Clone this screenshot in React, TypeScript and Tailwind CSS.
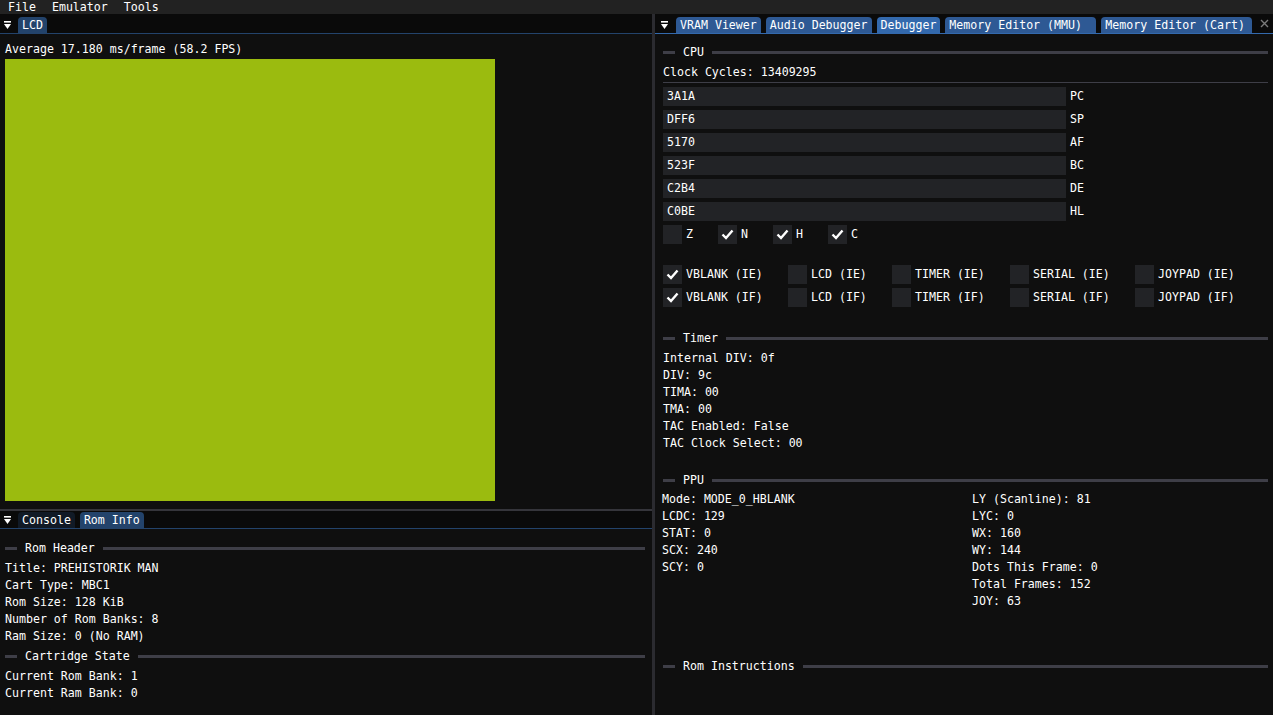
import React from "react";

const FONT = "font-['DejaVu_Sans_Mono','Liberation_Mono',monospace] text-[11.6px] leading-[13px]";
const SEP = "bg-[#3e3e47]";
// ImGui's pixel font sits 1px lower than DejaVu in a 13px line
const SH = "relative top-[1px]";

type Tab = { label: string; bg: string; w?: string };

function MenuIcon() {
  return (
    <svg width="7" height="8" viewBox="0 0 7 8" className="shrink-0">
      <rect x="0" y="0" width="7" height="1.6" fill="#fff" />
      <polygon points="0,3 7,3 3.5,8" fill="#fff" />
    </svg>
  );
}

function TabBar({ tabs, line, iconPad, tabPad, h, close }: { tabs: Tab[]; line: string; iconPad: string; tabPad: string; h: string; close?: boolean }) {
  return (
    <div className="flex flex-col bg-[#0a0a0a]">
      <div className={`flex items-end ${h}`}>
        <div className={`h-[16px] flex items-center ${iconPad}`}>
          <MenuIcon />
        </div>
        <div className={`flex items-end gap-[5px] ${tabPad}`}>
          {tabs.map((t) => (
            <div key={t.label} className={`h-[16px] px-[4px] rounded-t-[4px] flex items-center whitespace-pre ${t.bg} ${t.w ?? ""}`}>
              {t.label}
            </div>
          ))}
        </div>
        {close && (
          <div className="ml-auto h-[19px] w-[16px] flex items-center justify-center mr-[1px]">
            <svg width="9" height="9" viewBox="0 0 9 9">
              <path d="M1 1 L8 8 M8 1 L1 8" stroke="#7a7a7a" strokeWidth="1.4" />
            </svg>
          </div>
        )}
      </div>
      <div className={`h-[1px] ${line}`} />
    </div>
  );
}

function SepText({ label }: { label: string }) {
  return (
    <div className={`flex items-center h-[19px] ${SH}`}>
      <div className={`w-[12px] h-[3px] ${SEP}`} />
      <span className="px-[8px] whitespace-pre">{label}</span>
      <div className={`flex-1 h-[3px] ${SEP}`} />
    </div>
  );
}

function L({ children }: { children: React.ReactNode }) {
  return <div className={`whitespace-pre ${SH}`}>{children}</div>;
}

function Check({ on }: { on: boolean }) {
  return (
    <div className="w-[19px] h-[19px] bg-[#222326] flex items-center justify-center shrink-0">
      {on && (
        <svg width="13" height="11" viewBox="0 0 13 11">
          <path d="M1.5 5.5 L5 9 L11.5 1.5" fill="none" stroke="#ffffff" strokeWidth="2.4" />
        </svg>
      )}
    </div>
  );
}

function CheckItem({ on, label, w }: { on: boolean; label: string; w: string }) {
  return (
    <div className={`flex items-center gap-[4px] ${w}`}>
      <Check on={on} />
      <span className="whitespace-pre">{label}</span>
    </div>
  );
}

const regs = [
  ["3A1A", "PC"],
  ["DFF6", "SP"],
  ["5170", "AF"],
  ["523F", "BC"],
  ["C2B4", "DE"],
  ["C0BE", "HL"],
];

const irq = [
  ["VBLANK", "w-[125px]"],
  ["LCD", "w-[104px]"],
  ["TIMER", "w-[118px]"],
  ["SERIAL", "w-[125px]"],
  ["JOYPAD", ""],
];

export default function App() {
  return (
    <div className={`w-[1273px] h-[715px] overflow-hidden bg-[#0f0f0f] text-white flex flex-col ${FONT}`}>
      {/* menu bar */}
      <div className="h-[14px] bg-[#222222] flex items-start pl-[8px] gap-[16px]">
        <span className={SH}>File</span>
        <span className={SH}>Emulator</span>
        <span className={SH}>Tools</span>
      </div>

      <div className="flex flex-1 min-h-0">
        {/* left column */}
        <div className="w-[652px] flex flex-col">
          <div className="h-[495px] flex flex-col">
            <TabBar tabs={[{ label: "LCD", bg: "bg-[#23436b]" }]} line="bg-[#23436b]" iconPad="pl-[4px]" tabPad="pl-[7px]" h="h-[19px]" />
            <div className="flex flex-col gap-[4px] pt-[8px] pl-[5px]">
              <L>Average 17.180 ms/frame (58.2 FPS)</L>
              <div className="w-[490px] h-[442px] bg-[#9bbb0f]" />
            </div>
          </div>
          <div className="h-[2px] bg-[#35353b]" />
          <div className="flex-1 flex flex-col">
            <TabBar
              tabs={[
                { label: "Console", bg: "bg-[#111a26]" },
                { label: "Rom Info", bg: "bg-[#23436b]" },
              ]}
              line="bg-[#23436b]"
              iconPad="pl-[4px]"
              tabPad="pl-[7px]"
              h="h-[17px]"
            />
            <div className="flex flex-col gap-[4px] pt-[9px] pl-[5px] pr-[7px]">
              <SepText label="Rom Header" />
              <L>Title: PREHISTORIK MAN</L>
              <L>Cart Type: MBC1</L>
              <L>Rom Size: 128 KiB</L>
              <L>Number of Rom Banks: 8</L>
              <L>Ram Size: 0 (No RAM)</L>
              <SepText label="Cartridge State" />
              <L>Current Rom Bank: 1</L>
              <L>Current Ram Bank: 0</L>
            </div>
          </div>
        </div>

        {/* divider between dock nodes */}
        <div className="w-[3px] bg-[#2b2b30]" />

        {/* right column */}
        <div className="flex-1 flex flex-col">
          <TabBar
            tabs={[
              { label: "VRAM Viewer", bg: "bg-[#2e5994]" },
              { label: "Audio Debugger", bg: "bg-[#2e5994]" },
              { label: "Debugger", bg: "bg-[#3369ad]" },
              { label: "Memory Editor (MMU)", bg: "bg-[#2e5994]", w: "w-[151px]" },
              { label: "Memory Editor (Cart)", bg: "bg-[#2e5994]", w: "w-[151px]" },
            ]}
            line="bg-[#3369ad]"
            iconPad="pl-[6px]"
            tabPad="pl-[8px]"
            h="h-[19px]"
            close
          />
          <div className="flex flex-col gap-[4px] pt-[8px] pl-[8px] pr-[5px]">
            <SepText label="CPU" />
            <L>Clock Cycles: 13409295</L>
            <div className="h-[1px] bg-[#3e3e47]" />
            {regs.map(([v, r]) => (
              <div key={r} className="flex items-center gap-[4px] h-[19px]">
                <div className="w-[403px] h-[19px] bg-[#222326] pl-[4px] flex items-center">{v}</div>
                <span>{r}</span>
              </div>
            ))}
            <div className="flex h-[19px]">
              <CheckItem on={false} label="Z" w="w-[55px]" />
              <CheckItem on label="N" w="w-[55px]" />
              <CheckItem on label="H" w="w-[55px]" />
              <CheckItem on label="C" w="w-[55px]" />
            </div>
            <div className="h-[13px]" />
            {["IE", "IF"].map((k) => (
              <div key={k} className="flex h-[19px]">
                {irq.map(([n, w], i) => (
                  <CheckItem key={n} on={i === 0} label={`${n} (${k})`} w={w} />
                ))}
              </div>
            ))}
            <div className="h-[13px]" />
            <SepText label="Timer" />
            <L>Internal DIV: 0f</L>
            <L>DIV: 9c</L>
            <L>TIMA: 00</L>
            <L>TMA: 00</L>
            <L>TAC Enabled: False</L>
            <L>TAC Clock Select: 00</L>
            <div className="h-[13px]" />
            <SepText label="PPU" />
            <div className="flex -mt-[1px]">
              <div className="w-[310px] flex flex-col gap-[4px] -ml-[1px]">
                <L>Mode: MODE_0_HBLANK</L>
                <L>LCDC: 129</L>
                <L>STAT: 0</L>
                <L>SCX: 240</L>
                <L>SCY: 0</L>
              </div>
              <div className="flex flex-col gap-[4px]">
                <L>LY (Scanline): 81</L>
                <L>LYC: 0</L>
                <L>WX: 160</L>
                <L>WY: 144</L>
                <L>Dots This Frame: 0</L>
                <L>Total Frames: 152</L>
                <L>JOY: 63</L>
              </div>
            </div>
            <div className="h-[41px]" />
            <SepText label="Rom Instructions" />
          </div>
        </div>
      </div>
    </div>
  );
}
